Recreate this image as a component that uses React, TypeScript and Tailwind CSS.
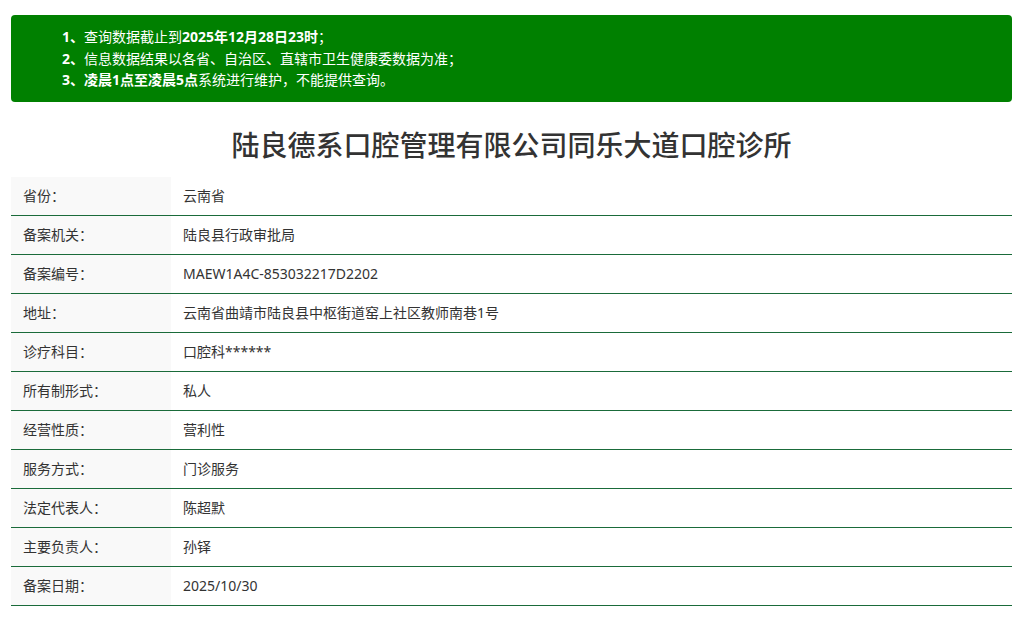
import React from "react";

const rows: [string, string][] = [
  ["省份：", "云南省"],
  ["备案机关：", "陆良县行政审批局"],
  ["备案编号：", "MAEW1A4C-853032217D2202"],
  ["地址：", "云南省曲靖市陆良县中枢街道窑上社区教师南巷1号"],
  ["诊疗科目：", "口腔科******"],
  ["所有制形式：", "私人"],
  ["经营性质：", "营利性"],
  ["服务方式：", "门诊服务"],
  ["法定代表人：", "陈超默"],
  ["主要负责人：", "孙铎"],
  ["备案日期：", "2025/10/30"],
];

export default function App() {
  return (
    <div
      className="w-[1018px] h-[630px] bg-white pl-[11px] pr-[6px] pt-[15px] text-[#333]"
      style={{ fontFamily: '"Noto Sans", "Noto Sans CJK SC", sans-serif' }}
    >
      <div className="bg-[#008000] rounded-[4px] pl-[51px] py-[11px] text-white text-[14px] leading-[21.5px]">
        <div>
          <b>1、</b>查询数据截止到<b>2025年12月28日23时</b>；
        </div>
        <div>
          <b>2、</b>信息数据结果以各省、自治区、直辖市卫生健康委数据为准；
        </div>
        <div>
          <b>3、凌晨1点至凌晨5点</b>系统进行维护，不能提供查询。
        </div>
      </div>
      <h1 className="text-center text-[28px] leading-[42px] mt-[22px] mb-[11px] text-[#333] font-medium">
        陆良德系口腔管理有限公司同乐大道口腔诊所
      </h1>
      <div className="flex flex-col">
        {rows.map(([k, v]) => (
          <div key={k} className="flex h-[39px] border-b border-[#1a6b3a] text-[14px]">
            <div className="w-[160px] bg-[#f9f9f9] px-3 flex items-center">{k}</div>
            <div className="flex-1 px-3 flex items-center">{v}</div>
          </div>
        ))}
      </div>
    </div>
  );
}
